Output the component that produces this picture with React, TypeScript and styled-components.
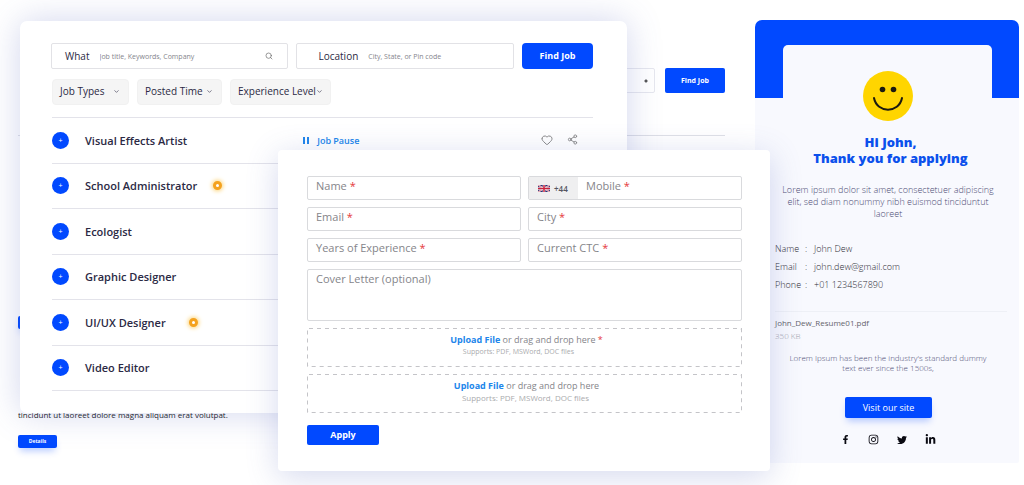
import React from 'react';
import styled, { createGlobalStyle } from 'styled-components';
import { Search, ChevronDown, Heart, Share2 } from 'lucide-react';
import { FaFacebookF, FaInstagram, FaTwitter, FaLinkedinIn } from 'react-icons/fa';

const GlobalStyle = createGlobalStyle`
  * { box-sizing: border-box; }
  body { margin: 0; background: #fff; font-family: 'Open Sans', 'Noto Sans', sans-serif; color: #2b2944; }
  button, input, select, textarea { font-family: inherit; margin: 0; }
  p, h1, h2, ul, dl, dd, dt { margin: 0; padding: 0; }
`;

const Stage = styled.main`
  display: grid;
  grid-template-columns: 18fr 2fr 258fr 349fr 128fr 15fr 249fr 5fr;
  align-items: start;
  min-height: 100vh;
  overflow: hidden;
`;

const Panel = styled.section`
  grid-row: 1;
  min-width: 0;
  background: #fff;
`;

/* Listing page behind */
const ListingPage = styled(Panel)`
  grid-column: 2 / 6;
  padding: 68px 30px 0 0;
`;

const ListingSearch = styled.div`
  display: flex;
  justify-content: flex-end;
  align-items: center;
  gap: 10px;
`;

const PlainSelect = styled.select`
  appearance: none;
  width: 120px;
  height: 25px;
  border: 1px solid #e6e7ee;
  border-radius: 2px;
  background: radial-gradient(circle at 110px 12px, #555 0 1px, transparent 2px) #fff;
`;

const Button = styled.button<{ $size?: 'tiny' | 'small' | 'large' | 'form' | 'site' }>`
  display: block;
  border: 0;
  padding: 0;
  color: #fff;
  background: #0149ff;
  font-weight: ${p => (p.$size === 'site' ? 400 : 700)};
  border-radius: ${p => (p.$size === 'large' ? 4 : 2)}px;
  width: ${p => ({ tiny: 39, small: 60, large: 71, form: 72, site: 87 })[p.$size ?? 'form']}px;
  height: ${p => ({ tiny: 13, small: 25, large: 26, form: 20, site: 21 })[p.$size ?? 'form']}px;
  line-height: ${p => ({ tiny: 13, small: 25, large: 26, form: 18, site: 21 })[p.$size ?? 'form']}px;
  font-size: ${p => ({ tiny: 5, small: 7, large: 9, form: 9, site: 9 })[p.$size ?? 'form']}px;
  box-shadow: ${p => (p.$size === 'tiny' || p.$size === 'site' ? '0 5px 7px -2px rgba(1, 73, 255, 0.28)' : 'none')};
`;

const Rule = styled.hr`
  height: 1px;
  border: 0;
  margin: 42px 0 0;
  background: #dfe0e6;
`;

const ListingBody = styled.div`
  padding-top: 180px;
`;

const ListingText = styled.p`
  font-size: 8px;
  line-height: 14px;
  color: #222;
  padding: 79px 0 13px;
`;

/* Job search */
const JobPanel = styled(Panel)`
  grid-column: 3 / 5;
  margin-top: 21px;
  padding: 22px 34px 22px 31px;
  border-radius: 7px;
  box-shadow: 0 0 34px rgba(80, 95, 185, 0.26);
  z-index: 1;
`;

const SearchBar = styled.form`
  display: grid;
  grid-template-columns: 238fr 218fr 71px;
  gap: 8px;
  align-items: center;
`;

const SearchField = styled.label<{ $inset: number }>`
  min-width: 0;
  display: flex;
  align-items: center;
  gap: 10px;
  height: 26px;
  border: 1px solid #e2e2e6;
  border-radius: 2px;
  padding: 0 14px 0 ${p => p.$inset}px;
  font-size: 10px;
  color: #2b2944;
  svg { flex: none; color: #666; }
`;

const SearchInput = styled.input`
  flex: 1;
  min-width: 0;
  border: 0;
  padding: 0;
  outline: 0;
  background: none;
  font-size: 7px;
  &::placeholder { color: #85858d; opacity: 1; }
`;

const Filters = styled.div`
  display: flex;
  gap: 8px;
  padding: 10px 0 12px 1px;
`;

const FilterButton = styled.button<{ $width: number }>`
  display: flex;
  justify-content: space-between;
  align-items: center;
  width: ${p => p.$width}px;
  height: 26px;
  border: 1px solid #f1f1f1;
  border-radius: 4px;
  background: #f5f5f5;
  padding: 0 8px 2px 7px;
  font-size: 10px;
  color: #2b2944;
  white-space: nowrap;
  svg { flex: none; }
`;

const JobList = styled.ul`
  list-style: none;
  display: grid;
  grid-auto-rows: 1fr;
  height: 274px;
  margin-left: 1px;
  border-bottom: 1px solid #e3e3ea;
`;

const JobRow = styled.li`
  display: flex;
  align-items: center;
  border-top: 1px solid #e3e3ea;
`;

const AddButton = styled.button`
  width: 17px;
  height: 17px;
  border: 0;
  border-radius: 50%;
  padding: 0;
  background: #0149ff;
  color: #fff;
  font-size: 7px;
  line-height: 17px;
`;

const JobTitle = styled.span`
  margin-left: 16px;
  font-size: 11px;
  font-weight: 600;
  white-space: nowrap;
`;

const Marker = styled.span<{ $gap: number }>`
  width: 9px;
  height: 9px;
  margin-left: ${p => p.$gap}px;
  border: 3px solid #f4a21f;
  border-radius: 50%;
  background: #fff;
  box-shadow: 0 0 4px 1px #fbd274;
`;

const PauseButton = styled.button`
  display: flex;
  align-items: center;
  gap: 8px;
  margin-left: 116px;
  border: 0;
  padding: 0;
  background: none;
  font-size: 9px;
  font-weight: 600;
  color: #2186eb;
  white-space: nowrap;
`;

const PauseBars = styled.span`
  width: 6px;
  height: 7px;
  border: solid #2186eb;
  border-width: 0 2px;
`;

const RowActions = styled.span`
  display: flex;
  gap: 14px;
  margin-left: auto;
  padding-right: 15px;
  color: #888;
`;

const IconButton = styled.button`
  display: flex;
  border: 0;
  padding: 0;
  background: none;
  color: inherit;
`;

/* Application form */
const FormPanel = styled(Panel)`
  grid-column: 4 / 7;
  margin-top: 150px;
  padding: 26px 28px 26px 29px;
  border-radius: 4px;
  box-shadow: 0 6px 32px rgba(80, 95, 185, 0.24);
  z-index: 3;
`;

const FormGrid = styled.form`
  display: grid;
  grid-template-columns: 1fr 1fr;
  gap: 7px;
`;

const Field = styled.div<{ $wide?: boolean; $height?: number }>`
  position: relative;
  display: flex;
  grid-column: ${p => (p.$wide ? '1 / -1' : 'auto')};
  height: ${p => p.$height ?? 24}px;
  border: 1px solid #d9dadd;
  border-radius: 2px;
  overflow: hidden;
`;

const FieldLabel = styled.label`
  position: absolute;
  inset: 2px auto auto 8px;
  font-size: 11px;
  line-height: 14px;
  color: #85858a;
  pointer-events: none;
`;

const InputWrap = styled.div`
  position: relative;
  flex: 1;
  display: flex;
`;

const FieldInput = styled.input`
  flex: 1;
  min-width: 0;
  border: 0;
  background: none;
  padding: 0 8px;
  font-size: 11px;
`;

const FieldArea = styled.textarea`
  flex: 1;
  border: 0;
  resize: none;
  background: none;
  padding: 4px 8px;
  font-size: 11px;
`;

const Required = styled.span`
  color: #e5383b;
`;

const CountryCode = styled.button`
  display: flex;
  align-items: center;
  gap: 4px;
  width: 49px;
  padding: 0 0 0 9px;
  border: 0;
  background: #efeff0;
  font-size: 8px;
  font-weight: 600;
  color: #55555f;
`;

const DropZone = styled.div`
  position: relative;
  grid-column: 1 / -1;
  height: 39px;
  text-align: center;
  padding: 5px 0 0 4px;
  font-size: 9px;
  line-height: 14px;
  color: #85858a;
`;

const DashedFrame = styled.svg`
  position: absolute;
  inset: 0;
  width: 100%;
  height: 100%;
  pointer-events: none;
`;

const UploadLink = styled.a`
  font-weight: 700;
  color: #2186eb;
  text-decoration: none;
`;

const Supports = styled.p<{ $small?: boolean }>`
  font-size: ${p => (p.$small ? 7 : 8)}px;
  line-height: 10px;
  color: #aaabae;
  padding-right: ${p => (p.$small ? 16 : 2)}px;
`;

const SubmitRow = styled.div`
  grid-column: 1 / -1;
  padding-top: 5px;
`;

/* Confirmation */
const ThanksPanel = styled(Panel)`
  grid-column: 6 / 8;
  margin-top: 20px;
  background: #f8f9fe;
  border-radius: 7px 7px 2px 2px;
  overflow: hidden;
  z-index: 2;
`;

const ThanksHeader = styled.header`
  height: 78px;
  padding: 25px 27px 0 28px;
  background: #0149ff;
`;

const HeaderSheet = styled.div`
  height: 53px;
  display: flex;
  justify-content: center;
  padding-top: 26px;
  border-radius: 5px 5px 0 0;
  background: #f8f9fe;
  svg { flex: none; overflow: visible; }
`;

const ThanksTitle = styled.h1`
  padding-top: 36px;
  padding-left: 7px;
  text-align: center;
  font-size: 13px;
  line-height: 16px;
  font-weight: 800;
  color: #0b50ec;
`;

const ThanksText = styled.p<{ $size: number; $line: number; $top: number }>`
  padding-top: ${p => p.$top}px;
  padding-left: 2px;
  text-align: center;
  font-size: ${p => p.$size}px;
  font-weight: 300;
  line-height: ${p => p.$line}px;
  color: #4c4c74;
`;

const Details = styled.dl`
  display: grid;
  grid-template-columns: 30px 9px 1fr;
  padding: 20px 0 0 20px;
  font-size: 9px;
  font-weight: 300;
  line-height: 18px;
  color: #2c2c35;
`;

const Attachment = styled.div`
  margin: 17px 12px 0 20px;
  padding-top: 4px;
  border-top: 1px solid #eef0f6;
  font-size: 8px;
  line-height: 13px;
  color: #65656d;
`;

const FileSize = styled.p`
  font-weight: 300;
  color: #a0a1ac;
`;

const Visit = styled.div`
  display: flex;
  justify-content: center;
  padding: 24px 0 0 3px;
`;

const Social = styled.nav`
  display: flex;
  justify-content: center;
  align-items: center;
  padding: 16px 0 18px 3px;
  gap: 18px;
`;

const SocialLink = styled.a`
  display: flex;
  color: #0a0a12;
`;

const jobs: { title: string; markerGap?: number; paused?: boolean }[] = [
  { title: 'Visual Effects Artist', paused: true },
  { title: 'School Administrator', markerGap: 16 },
  { title: 'Ecologist' },
  { title: 'Graphic Designer' },
  { title: 'UI/UX Designer', markerGap: 23 },
  { title: 'Video Editor' },
];

const UkFlag = () => (
  <svg width="12" height="7" viewBox="0 0 24 14" aria-hidden="true">
    <rect width="24" height="14" fill="#2b2f72" />
    <path d="M0 0L24 14M24 0L0 14" stroke="#fff" strokeWidth="3" />
    <path d="M0 0L24 14M24 0L0 14" stroke="#c8213c" strokeWidth="1" />
    <path d="M12 0V14M0 7H24" stroke="#fff" strokeWidth="5" />
    <path d="M12 0V14M0 7H24" stroke="#c8213c" strokeWidth="3" />
  </svg>
);

const Smiley = () => (
  <svg width="50" height="50" viewBox="0 0 50 50" aria-hidden="true">
    <circle cx="25" cy="25" r="25" fill="#ffd500" />
    <circle cx="19.500" cy="18.500" r="2.800" fill="#1c1a10" />
    <circle cx="30.500" cy="18.500" r="2.800" fill="#1c1a10" />
    <path d="M11 27C14 42.500 36 42.500 39 27" fill="none" stroke="#1c1a10" strokeWidth="2" strokeLinecap="round" />
  </svg>
);

const TextField = ({ id, label }: { id: string; label: string }) => (
  <InputWrap>
    <FieldInput id={id} />
    <FieldLabel htmlFor={id}>{label} <Required>*</Required></FieldLabel>
  </InputWrap>
);

const Upload = ({ required }: { required?: boolean }) => (
  <DropZone>
    <DashedFrame aria-hidden="true">
      <rect x="0" y="0" width="100%" height="100%" rx="2" fill="none" stroke="#c4c4c8" strokeWidth="2" strokeDasharray="4 4" />
    </DashedFrame>
    <p><UploadLink href="#upload">Upload File</UploadLink> or drag and drop here{required && <Required> *</Required>}</p>
    <Supports $small={required}>Supports: PDF, MSWord, DOC files</Supports>
  </DropZone>
);

export default function App() {
  return (
    <>
      <GlobalStyle />
      <Stage>
        <ListingPage>
          <ListingSearch>
            <PlainSelect aria-label="Category" />
            <Button $size="small">Find Job</Button>
          </ListingSearch>
          <Rule />
          <ListingBody>
            <Button $size="tiny" aria-label="Details" />
            <ListingText>tincidunt ut laoreet dolore magna aliquam erat volutpat.</ListingText>
            <Button $size="tiny">Details</Button>
          </ListingBody>
        </ListingPage>

        <JobPanel>
          <SearchBar>
            <SearchField $inset={13}>
              What
              <SearchInput placeholder="Job title, Keywords, Company" />
              <Search size={8} />
            </SearchField>
            <SearchField $inset={21}>
              Location
              <SearchInput placeholder="City, State, or Pin code" />
            </SearchField>
            <Button $size="large" type="button">Find Job</Button>
          </SearchBar>
          <Filters>
            <FilterButton $width={77}>Job Types <ChevronDown size={7} /></FilterButton>
            <FilterButton $width={85}>Posted Time <ChevronDown size={7} /></FilterButton>
            <FilterButton $width={101}>Experience Level <ChevronDown size={7} /></FilterButton>
          </Filters>
          <JobList>
            {jobs.map(job => (
              <JobRow key={job.title}>
                <AddButton aria-label={`Open ${job.title}`}>+</AddButton>
                <JobTitle>{job.title}</JobTitle>
                {job.markerGap && <Marker $gap={job.markerGap} />}
                {job.paused && (
                  <>
                    <PauseButton><PauseBars />Job Pause</PauseButton>
                    <RowActions>
                      <IconButton aria-label="Save"><Heart size={12} /></IconButton>
                      <IconButton aria-label="Share"><Share2 size={11} /></IconButton>
                    </RowActions>
                  </>
                )}
              </JobRow>
            ))}
          </JobList>
        </JobPanel>

        <FormPanel>
          <FormGrid>
            <Field><TextField id="name" label="Name" /></Field>
            <Field>
              <CountryCode type="button"><UkFlag />+44</CountryCode>
              <TextField id="mobile" label="Mobile" />
            </Field>
            <Field><TextField id="email" label="Email" /></Field>
            <Field><TextField id="city" label="City" /></Field>
            <Field><TextField id="years" label="Years of Experience" /></Field>
            <Field><TextField id="ctc" label="Current CTC" /></Field>
            <Field $wide $height={52}>
              <FieldArea id="cover" />
              <FieldLabel htmlFor="cover">Cover Letter (optional)</FieldLabel>
            </Field>
            <Upload required />
            <Upload />
            <SubmitRow><Button $size="form" type="button">Apply</Button></SubmitRow>
          </FormGrid>
        </FormPanel>

        <ThanksPanel>
          <ThanksHeader><HeaderSheet><Smiley /></HeaderSheet></ThanksHeader>
          <ThanksTitle>Hi John,<br />Thank you for applying</ThanksTitle>
          <ThanksText $size={9} $line={12} $top={18}>
            Lorem ipsum dolor sit amet, consectetuer adipiscing<br />
            elit, sed diam nonummy nibh euismod tinciduntut<br />
            laoreet
          </ThanksText>
          <Details>
            <dt>Name</dt><span>:</span><dd>John Dew</dd>
            <dt>Email</dt><span>:</span><dd>john.dew@gmail.com</dd>
            <dt>Phone</dt><span>:</span><dd>+01 1234567890</dd>
          </Details>
          <Attachment>
            John_Dew_Resume01.pdf
            <FileSize>350 KB</FileSize>
          </Attachment>
          <ThanksText $size={8} $line={10} $top={11}>
            Lorem Ipsum has been the industry's standard dummy<br />
            text ever since the 1500s,
          </ThanksText>
          <Visit><Button $size="site">Visit our site</Button></Visit>
          <Social>
            <SocialLink href="#facebook" aria-label="Facebook"><FaFacebookF size={9} /></SocialLink>
            <SocialLink href="#instagram" aria-label="Instagram"><FaInstagram size={11} /></SocialLink>
            <SocialLink href="#twitter" aria-label="Twitter"><FaTwitter size={10} /></SocialLink>
            <SocialLink href="#linkedin" aria-label="LinkedIn"><FaLinkedinIn size={11} /></SocialLink>
          </Social>
        </ThanksPanel>
      </Stage>
    </>
  );
}
